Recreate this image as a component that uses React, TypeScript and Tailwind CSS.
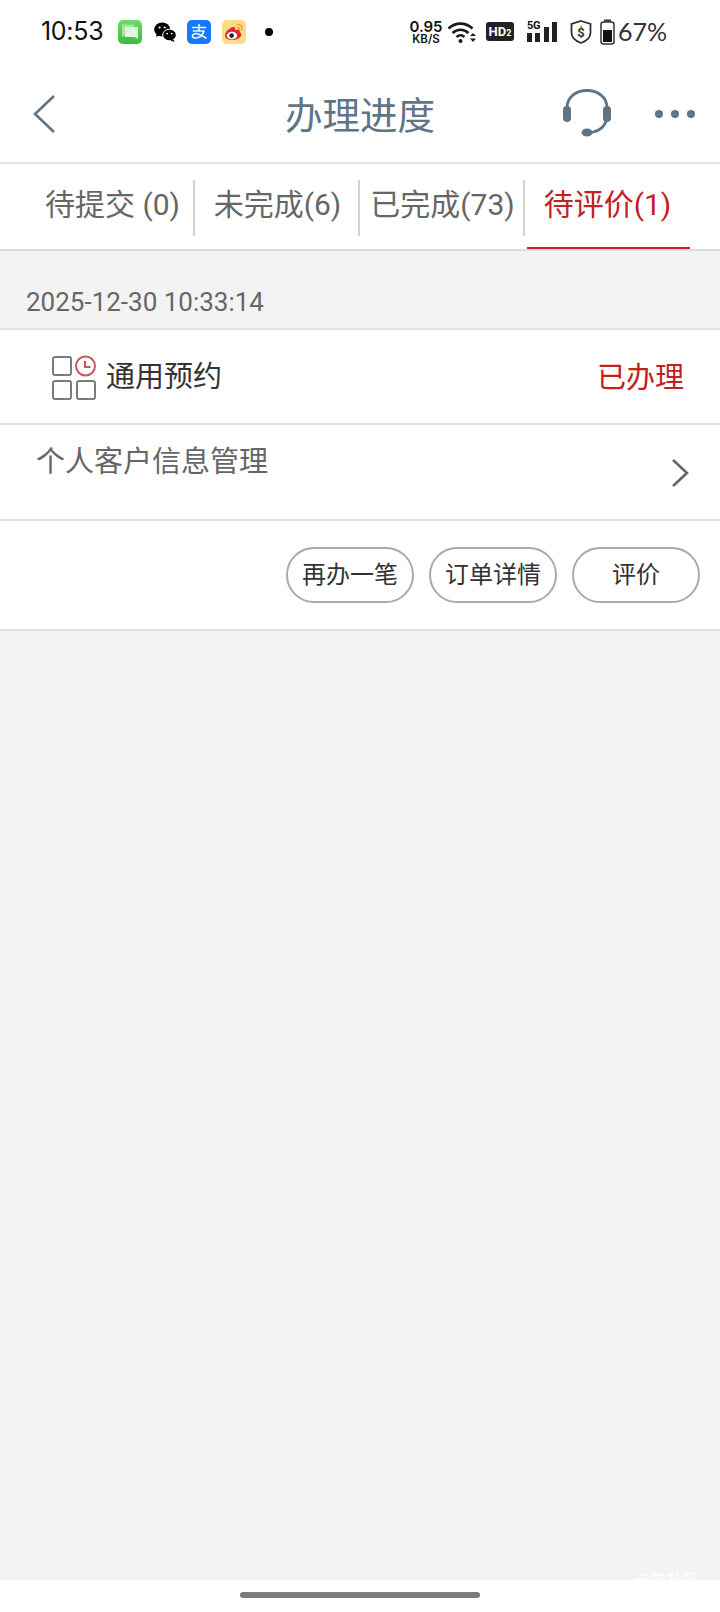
import React from "react";

const FONT = "font-['Roboto','Noto_Sans_CJK_SC',sans-serif]";

function Messages() {
  return (
    <svg width="24" height="24" viewBox="0 0 24 24">
      <defs>
        <linearGradient id="g1" x1="0" y1="0" x2="0" y2="1">
          <stop offset="0" stopColor="#6fdc6a" />
          <stop offset="1" stopColor="#3cb93f" />
        </linearGradient>
      </defs>
      <rect width="24" height="24" rx="5" fill="url(#g1)" />
      <path d="M4 4.500h12v10H8l-4 2.500z" fill="#a9e3a6" />
      <path d="M7 7h13v9.500v2.500l-3.500-2H7z" fill="#dff5dc" />
    </svg>
  );
}

function WeChat() {
  return (
    <svg width="24" height="24" viewBox="0 0 24 24">
      <ellipse cx="9.200" cy="9.500" rx="8" ry="7" fill="#000" />
      <path d="M4 13l-1 4 4-2z" fill="#000" />
      <ellipse cx="16.500" cy="15" rx="6.800" ry="5.800" fill="#000" stroke="#fff" strokeWidth="1" />
      <path d="M20 19l1.500 3-4-1.500z" fill="#000" />
      <circle cx="6.600" cy="7.500" r="1.100" fill="#fff" />
      <circle cx="11.800" cy="7.500" r="1.100" fill="#fff" />
      <circle cx="14.200" cy="13.600" r="0.900" fill="#fff" />
      <circle cx="18.800" cy="13.600" r="0.900" fill="#fff" />
    </svg>
  );
}

function Alipay() {
  return (
    <svg width="24" height="24" viewBox="0 0 24 24">
      <rect width="24" height="24" rx="5" fill="#1677ff" />
      <path d="M5.500 7.500h13M12 4.500v6.500M6.500 11h10.500c-1 3.500-4 6.500-8 7-2.500.3-3.500-.8-3.500-2 0-2.500 4-3 7-1.500l6.500 3.500" fill="none" stroke="#e8f2ff" strokeWidth="1.700" strokeLinecap="round" strokeLinejoin="round" />
    </svg>
  );
}

function Weibo() {
  return (
    <svg width="24" height="24" viewBox="0 0 24 24">
      <rect width="24" height="24" rx="5" fill="#fbdc8a" />
      <path d="M3 15.500c0-4 5.500-8.500 8.500-8.500 2 0 2 1.700 1.500 3 2.500-1 4.800-.8 4.800 1 0 .6-.2 1-.2 1 1 .4 1.600 1.200 1.600 2.500 0 3-4 5.500-8.500 5.500S3 18.500 3 15.500z" fill="#e4262c" />
      <ellipse cx="10" cy="15.600" rx="5.200" ry="3.800" fill="#fff" />
      <circle cx="9.600" cy="15.600" r="2.300" fill="#222" />
      <path d="M15 4.500c3.500-.6 6 2.200 5 5.500M15.500 7.500c1.600-.3 2.600 1 2.200 2.500" fill="none" stroke="#ef9a2c" strokeWidth="1.300" strokeLinecap="round" />
    </svg>
  );
}

function Wifi() {
  return (
    <svg width="30" height="24" viewBox="0 0 30 24">
      <path d="M1.500 8.500c7-6.500 17-6.500 24 0M5.500 13c4.800-4.300 11.200-4.300 16 0M9.500 17c2.500-2.200 5.500-2.200 8 0" fill="none" stroke="#1a1a1a" strokeWidth="2.600" />
      <circle cx="13.500" cy="21" r="2" fill="#1a1a1a" />
      <path d="M26 13l3 3h-6zM26 22l3-3.500h-6z" fill="#1a1a1a" />
    </svg>
  );
}

function Headset() {
  return (
    <svg width="50" height="50" viewBox="0 0 50 50" fill="none">
      <path d="M5 20C5 9 14 2.500 25 2.500S45 9 45 20" stroke="#5f7485" strokeWidth="2.800" />
      <path d="M44.500 32C42.500 39 37 43 30 44.500" stroke="#5f7485" strokeWidth="2.800" />
      <rect x="1" y="18" width="8" height="16" rx="4" fill="#5f7485" />
      <rect x="41" y="18" width="8" height="16" rx="4" fill="#5f7485" />
      <ellipse cx="25" cy="44.500" rx="5.500" ry="4" fill="#5f7485" />
    </svg>
  );
}

function GridClock() {
  return (
    <svg width="46" height="46" viewBox="0 0 46 46" fill="none">
      <rect x="1" y="3" width="18" height="18" rx="2" stroke="#7b7b7b" strokeWidth="2" />
      <rect x="1" y="27" width="18" height="18" rx="2" stroke="#7b7b7b" strokeWidth="2" />
      <rect x="25" y="27" width="18" height="18" rx="2" stroke="#7b7b7b" strokeWidth="2" />
      <circle cx="33.500" cy="12" r="9.500" stroke="#c5595b" strokeWidth="2" />
      <path d="M33 7v6h5.500" stroke="#c5595b" strokeWidth="2" />
    </svg>
  );
}

const tabs = ["待提交 (0)", "未完成(6)", "已完成(73)", "待评价(1)"];

export default function App() {
  return (
    <div className={`${FONT} relative flex h-[1612px] w-[720px] flex-col overflow-hidden bg-white`}>
      {/* status bar */}
      <div className="flex h-[64px] shrink-0 items-center pl-[41px] pb-[1px]">
        <span className="w-[77px] font-['Inter',sans-serif] text-[25px] leading-none tracking-[-0.3px] text-[#111]">10:53</span>
        <Messages />
        <span className="ml-[11px]"><WeChat /></span>
        <span className="ml-[10px]"><Alipay /></span>
        <span className="ml-[11px]"><Weibo /></span>
        <span className="ml-[19px] h-[8px] w-[8px] rounded-full bg-black" />
        <div className="ml-[134px] flex w-[38px] flex-col items-center font-['Inter',sans-serif] font-semibold leading-none text-[#111]">
          <span className="text-[15px] leading-[14px]">0.95</span>
          <span className="text-[11.5px] leading-[10px]">KB/S</span>
        </div>
        <span className="ml-[2px]"><Wifi /></span>
        <span className="ml-[9px] flex h-[19px] w-[28px] items-center justify-center rounded-[3px] bg-[#222] font-['Roboto',sans-serif] text-[13px] font-bold leading-none text-white">HD<span className="mt-[4px] text-[9px]">2</span></span>
        <div className="ml-[13px] mb-[3px] flex h-[24px] w-[31px] items-end gap-[3px]">
          <div className="flex w-[15px] flex-col items-start">
            <span className="h-[11px] whitespace-nowrap text-[11px] font-bold leading-[11px] tracking-[-0.4px] text-[#111]">5G</span>
            <div className="mt-[2px] flex items-end gap-[3px]">
              <span className="h-[9px] w-[5px] bg-[#222]" />
              <span className="h-[9px] w-[5px] bg-[#222]" />
            </div>
          </div>
          <span className="ml-[-1px] h-[15px] w-[5px] bg-[#222]" />
          <span className="h-[20px] w-[5px] bg-[#222]" />
        </div>
        <svg className="ml-[11px]" width="24" height="26" viewBox="0 0 24 26" fill="none">
          <path d="M12 2l9.500 3v8.500c0 5-4 8.500-9.500 10.500C6.500 22 2.500 18.500 2.500 13.500V5z" stroke="#333" strokeWidth="1.800" />
          <text x="12" y="18" textAnchor="middle" fontSize="13" fontWeight="700" fontFamily="Roboto" fill="#333">$</text>
        </svg>
        <svg className="ml-[7px]" width="15" height="26" viewBox="0 0 15 26" fill="none">
          <rect x="4" y="0.500" width="7" height="2" fill="#333" />
          <rect x="1" y="3" width="13" height="22" rx="2.500" stroke="#333" strokeWidth="1.500" />
          <rect x="3" y="11" width="9" height="12" fill="#111" />
        </svg>
        <span className="ml-[3px] font-['Lato',sans-serif] text-[25px] leading-none text-[#333]">67%</span>
      </div>

      {/* header */}
      <div className="flex h-[100px] shrink-0 items-center border-b-[2px] border-[#e3e3e3] pl-[30px] pr-[24px] pt-[6px]">
        <svg className="mt-[-4px]" width="28" height="42" viewBox="0 0 28 42" fill="none">
          <path d="M24 3L5 21l19 18" stroke="#5f7485" strokeWidth="2.600" />
        </svg>
        <span className="ml-[227px] mt-[1px] text-[37.5px] leading-none text-[#5f7485]">办理进度</span>
        <span className="ml-[127px] mt-[-6px]"><Headset /></span>
        <div className="ml-[43px] mt-[-4px] flex gap-[8px]">
          <span className="h-[8px] w-[8px] rounded-full bg-[#5f7485]" />
          <span className="h-[8px] w-[8px] rounded-full bg-[#5f7485]" />
          <span className="h-[8px] w-[8px] rounded-full bg-[#5f7485]" />
        </div>
      </div>

      {/* tabs */}
      <div className="flex h-[87px] shrink-0 border-b-[2px] border-[#dcdcdc] px-[30px]">
        {tabs.map((t, i) => (
          <div key={t} className="relative flex w-[165px] items-center justify-center pb-[3px]">
            <span className={`text-[30px] leading-none ${i === 3 ? "text-[#c4201f]" : "text-[#666]"}`}>{t}</span>
            {i < 3 && <span className="absolute right-0 top-[16px] h-[56px] w-[2px] bg-[#d4d4d4]" />}
            {i === 3 && <span className="absolute bottom-0 left-[2px] right-0 h-[2px] bg-[#c4201f]" />}
          </div>
        ))}
      </div>

      {/* date */}
      <div className="flex h-[79px] shrink-0 items-end border-b-[2px] border-[#e3e3e3] bg-[#f3f3f3] pb-[11px] pl-[26px]">
        <span className="text-[26px] leading-[30px] text-[#666]">2025-12-30 10:33:14</span>
      </div>

      {/* service row */}
      <div className="flex h-[95px] shrink-0 items-center border-b-[2px] border-[#e3e3e3] pl-[52px] pr-[36px]">
        <GridClock />
        <span className="ml-[8px] mt-[2px] text-[29px] leading-none text-[#333]">通用预约</span>
        <span className="ml-auto mt-[3px] text-[29px] leading-none text-[#c4201f]">已办理</span>
      </div>

      {/* content row */}
      <div className="flex h-[96px] shrink-0 border-b-[2px] border-[#e3e3e3] pl-[36px] pr-[30px]">
        <span className="mt-[23px] text-[29px] leading-none text-[#666]">个人客户信息管理</span>
        <svg className="ml-auto mt-[33px]" width="20" height="30" viewBox="0 0 20 30" fill="none">
          <path d="M3 2l14 13L3 28" stroke="#666" strokeWidth="2.600" />
        </svg>
      </div>

      {/* actions */}
      <div className="flex h-[110px] shrink-0 items-center justify-end gap-[15px] border-b-[2px] border-[#e3e3e3] pr-[20px]">
        {["再办一笔", "订单详情", "评价"].map((b) => (
          <div key={b} className="flex h-[56px] w-[128px] items-center justify-center rounded-full border-[2px] border-[#aaaaaa] text-[24px] leading-none text-[#333]">
            {b}
          </div>
        ))}
      </div>

      {/* empty area */}
      <div className="relative flex-1 overflow-hidden bg-[#f3f3f3]">
        <span className="absolute bottom-[-9px] right-[22px] text-[16px] leading-none text-white">卡农社区</span>
      </div>

      {/* gesture bar */}
      <div className="flex h-[32px] shrink-0 items-start justify-center bg-white pt-[12px]">
        <span className="h-[6px] w-[240px] rounded-full bg-[#7c7c7c]" />
      </div>
    </div>
  );
}
